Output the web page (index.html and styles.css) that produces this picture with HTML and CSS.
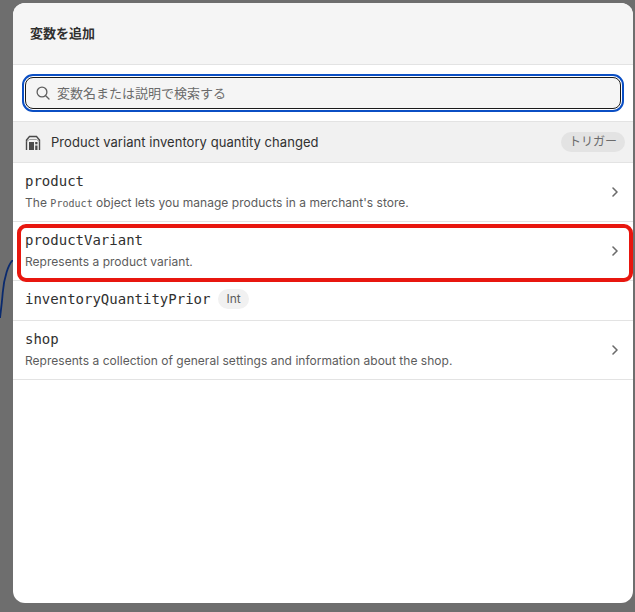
FILE: index.html
```html
<!DOCTYPE html>
<html lang="ja">
<head>
<meta charset="utf-8">
<title>変数を追加</title>
<link rel="stylesheet" href="styles.css">
</head>
<body>
<svg class="backdrop-curve" width="13" height="60" viewBox="0 0 13 60" fill="none"><path d="M13 0C8.500 4 4 17 2.700 33C2 42 1 50 0 58" stroke="#0a2a6e" stroke-width="1.800"/></svg>
<main class="modal">
  <header class="modal-header"><h1 class="modal-title">変数を追加</h1></header>
  <div class="search-section">
    <div class="search-box">
      <svg class="search-icon" width="16" height="16" viewBox="0 0 16 16" fill="none"><circle cx="7" cy="7" r="4.900" stroke="#5f5f5f" stroke-width="1.300"/><path d="M10.700 10.700 14 14" stroke="#5f5f5f" stroke-width="1.300" stroke-linecap="round"/></svg>
      <span class="search-placeholder">変数名または説明で検索する</span>
    </div>
  </div>
  <div class="trigger-row">
    <svg class="store-icon" width="16" height="16" viewBox="0 0 16 16" fill="none"><path d="M1.500 16V6L4.500 2.500H11.500L14.500 6V16" stroke="#4a4a4a" stroke-width="1.400"/><path d="M1.500 7.500 4.500 5.500H11.500L14.500 7.500" stroke="#8a8a8a" stroke-width="0.800"/><rect x="4" y="8" width="5" height="8" fill="#4a4a4a"/><rect x="10.200" y="8" width="2.300" height="2.300" fill="#4a4a4a"/><rect x="10.200" y="11.500" width="2.300" height="4.500" fill="#4a4a4a"/></svg>
    <span class="trigger-label">Product variant inventory quantity changed</span>
    <span class="badge badge-trigger">トリガー</span>
  </div>
  <ul class="var-list">
    <li class="var-row">
      <div class="var-text">
        <div class="var-name">product</div>
        <div class="var-desc">The <code class="inline-code">Product</code> object lets you manage products in a merchant's store.</div>
      </div>
      <svg class="chevron" width="16" height="16" viewBox="0 0 16 16" fill="none"><path d="M6 4 10 8 6 12" stroke="#6b6b6b" stroke-width="1.600" stroke-linecap="round" stroke-linejoin="round"/></svg>
    </li>
    <li class="var-row">
      <div class="var-text">
        <div class="var-name">productVariant</div>
        <div class="var-desc">Represents a product variant.</div>
      </div>
      <svg class="chevron" width="16" height="16" viewBox="0 0 16 16" fill="none"><path d="M6 4 10 8 6 12" stroke="#6b6b6b" stroke-width="1.600" stroke-linecap="round" stroke-linejoin="round"/></svg>
    </li>
    <li class="var-row var-row-single">
      <div class="var-name">inventoryQuantityPrior</div>
      <span class="badge badge-type">Int</span>
    </li>
    <li class="var-row">
      <div class="var-text">
        <div class="var-name">shop</div>
        <div class="var-desc">Represents a collection of general settings and information about the shop.</div>
      </div>
      <svg class="chevron" width="16" height="16" viewBox="0 0 16 16" fill="none"><path d="M6 4 10 8 6 12" stroke="#6b6b6b" stroke-width="1.600" stroke-linecap="round" stroke-linejoin="round"/></svg>
    </li>
  </ul>
</main>
<div class="highlight"></div>
</body>
</html>
```
FILE: styles.css
```css
* { box-sizing: border-box; }
html, body { margin: 0; height: 100%; }
body {
  background: #6e6e6e;
  font-family: Inter, "Noto Sans CJK JP", sans-serif;
  color: #303030;
  padding: 3px 2px 0 13px;
  overflow: hidden;
}
.backdrop-curve { position: absolute; left: 0; top: 260px; }
.modal {
  width: 620px;
  height: 600px;
  background: #fff;
  border-radius: 12px;
  overflow: hidden;
}
.modal-header {
  height: 62px;
  background: #f5f5f5;
  border-bottom: 1px solid #e3e3e3;
  display: flex;
  align-items: center;
  padding: 0 0 2px 17px;
}
.modal-title { margin: 0; font-size: 13px; font-weight: 600; color: #303030; }
.search-section {
  height: 57px;
  padding: 12px 12px 0;
  border-bottom: 1px solid #e3e3e3;
}
.search-box {
  height: 32px;
  display: flex;
  align-items: center;
  gap: 6px;
  padding: 0 0 1px 9px;
  background: #f5f5f5;
  border: 1px solid #1a1a1a;
  border-radius: 8px;
  outline: 2px solid #0b4fc4;
  outline-offset: 1px;
}
.search-icon { flex: none; }
.search-placeholder { font-size: 13px; color: #6b6b6b; }
.trigger-row {
  height: 41px;
  display: flex;
  align-items: center;
  padding: 0 8px 0 12px;
  background: #f1f1f1;
  border-bottom: 1px solid #e3e3e3;
}
.store-icon { flex: none; margin-right: 10px; }
.trigger-label { flex: 1; font-size: 13px; letter-spacing: 0.05px; color: #303030; }
.badge { border-radius: 10px; font-size: 12px; line-height: 20px; height: 20px; }
.badge-trigger { background: #e3e3e3; color: #6b6b6b; padding: 0 8px; }
.badge-type { background: #f1f1f1; color: #5c5c5c; padding: 0 8px; margin-left: 8px; }
.var-list { list-style: none; margin: 0; padding: 0; }
.var-row {
  height: 59px;
  display: flex;
  align-items: flex-start;
  justify-content: space-between;
  padding: 8px 10px 0 12px;
  border-bottom: 1px solid #e3e3e3;
}
.var-row-single { height: 40px; justify-content: flex-start; align-items: center; padding: 0 10px 3px 12px; }
.var-name { font-family: "DejaVu Sans Mono", monospace; font-size: 14px; line-height: 20px; color: #303030; }
.var-desc { font-size: 12px; letter-spacing: 0.03px; line-height: 16px; margin-top: 4px; color: #5c5c5c; }
.inline-code { font-family: "DejaVu Sans Mono", monospace; font-size: 10px; color: #5c5c5c; }
.chevron { flex: none; align-self: center; margin-top: -8px; }
.highlight {
  position: absolute;
  left: 17px;
  top: 224px;
  width: 616px;
  height: 58px;
  border: 4px solid #e8170f;
  border-radius: 9px;
}
```
